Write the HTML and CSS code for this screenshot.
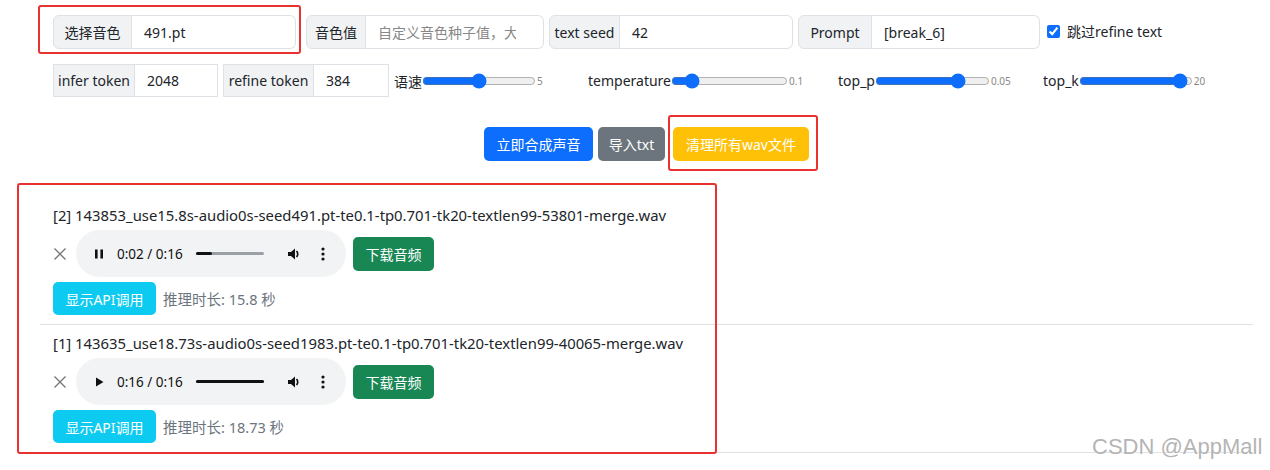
FILE: index.html
```html
<!DOCTYPE html>
<html lang="zh-CN">
<head>
    <meta charset="UTF-8">
    <title>ChatTTS WebUI</title>
    <link rel="stylesheet" href="styles.css">
</head>
<body>
    <div class="page">
        <div class="row row-top">
            <div class="input-group round g-voice">
                <span class="ig-label">选择音色</span>
                <input class="ig-input" type="text" value="491.pt">
            </div>
            <div class="input-group round g-seed">
                <span class="ig-label">音色值</span>
                <input class="ig-input" type="text" placeholder="自定义音色种子值，大于0的整数">
            </div>
            <div class="input-group round g-text">
                <span class="ig-label">text seed</span>
                <input class="ig-input" type="text" value="42">
            </div>
            <div class="input-group round g-prompt">
                <span class="ig-label">Prompt</span>
                <input class="ig-input" type="text" value="[break_6]">
            </div>
            <label class="check">
                <input type="checkbox" checked>
                <span>跳过refine text</span>
            </label>
        </div>

        <div class="row row-params">
            <div class="input-group g-infer">
                <span class="ig-label">infer token</span>
                <input class="ig-input" type="text" value="2048">
            </div>
            <div class="input-group g-refine">
                <span class="ig-label">refine token</span>
                <input class="ig-input" type="text" value="384">
            </div>
            <div class="slider s-speed">
                <span class="s-label">语速</span>
                <input type="range" min="1" max="9" value="5" style="width:114px">
                <span class="s-value">5</span>
            </div>
            <div class="slider s-temp">
                <span class="s-label">temperature</span>
                <input type="range" min="0" max="100" value="13" style="width:117px">
                <span class="s-value">0.1</span>
            </div>
            <div class="slider s-topp">
                <span class="s-label">top_p</span>
                <input type="range" min="0" max="100" value="76" style="width:115px">
                <span class="s-value">0.05</span>
            </div>
            <div class="slider s-topk">
                <span class="s-label">top_k</span>
                <input type="range" min="0" max="100" value="95" style="width:114px">
                <span class="s-value">20</span>
            </div>
        </div>

        <div class="row row-actions">
            <button class="btn btn-primary">立即合成声音</button>
            <button class="btn btn-secondary">导入txt</button>
            <button class="btn btn-warning">清理所有wav文件</button>
        </div>

        <ul class="results">
            <li class="result">
                <div class="result-name">[2] 143853_use15.8s-audio0s-seed491.pt-te0.1-tp0.701-tk20-textlen99-53801-merge.wav</div>
                <div class="player-row">
                    <span class="remove">
                        <svg width="14" height="14" viewBox="0 0 14 14"><path d="M1.5 1.5 L12.5 12.5 M12.5 1.5 L1.5 12.5" stroke="#777" stroke-width="1.4"/></svg>
                    </span>
                    <div class="audio">
                        <svg class="a-play" width="12" height="12" viewBox="0 0 12 12"><rect x="2" y="1.5" width="2.6" height="9" fill="#111"/><rect x="7.4" y="1.5" width="2.6" height="9" fill="#111"/></svg>
                        <span class="a-time">0:02 / 0:16</span>
                        <div class="a-track"><div class="a-played" style="width:24%"></div></div>
                        <svg class="a-vol" width="14" height="14" viewBox="0 0 14 14"><path d="M1 5 H4 L8 1.5 V12.5 L4 9 H1 Z" fill="#111"/><path d="M9.5 4 Q12 7 9.5 10" stroke="#111" stroke-width="1.6" fill="none"/></svg>
                        <svg class="a-more" width="4" height="14" viewBox="0 0 4 14"><circle cx="2" cy="2" r="1.6" fill="#111"/><circle cx="2" cy="7" r="1.6" fill="#111"/><circle cx="2" cy="12" r="1.6" fill="#111"/></svg>
                    </div>
                    <button class="btn btn-success">下载音频</button>
                </div>
                <div class="info-row">
                    <button class="btn btn-info">显示API调用</button>
                    <span class="duration">推理时长: 15.8 秒</span>
                </div>
            </li>
            <li class="result">
                <div class="result-name">[1] 143635_use18.73s-audio0s-seed1983.pt-te0.1-tp0.701-tk20-textlen99-40065-merge.wav</div>
                <div class="player-row">
                    <span class="remove">
                        <svg width="14" height="14" viewBox="0 0 14 14"><path d="M1.5 1.5 L12.5 12.5 M12.5 1.5 L1.5 12.5" stroke="#777" stroke-width="1.4"/></svg>
                    </span>
                    <div class="audio">
                        <svg class="a-play" width="12" height="12" viewBox="0 0 12 12"><path d="M3 1.5 L10.5 6 L3 10.5 Z" fill="#111"/></svg>
                        <span class="a-time">0:16 / 0:16</span>
                        <div class="a-track"><div class="a-played" style="width:100%"></div></div>
                        <svg class="a-vol" width="14" height="14" viewBox="0 0 14 14"><path d="M1 5 H4 L8 1.5 V12.5 L4 9 H1 Z" fill="#111"/><path d="M9.5 4 Q12 7 9.5 10" stroke="#111" stroke-width="1.6" fill="none"/></svg>
                        <svg class="a-more" width="4" height="14" viewBox="0 0 4 14"><circle cx="2" cy="2" r="1.6" fill="#111"/><circle cx="2" cy="7" r="1.6" fill="#111"/><circle cx="2" cy="12" r="1.6" fill="#111"/></svg>
                    </div>
                    <button class="btn btn-success">下载音频</button>
                </div>
                <div class="info-row">
                    <button class="btn btn-info">显示API调用</button>
                    <span class="duration">推理时长: 18.73 秒</span>
                </div>
            </li>
        </ul>
    </div>

    <!-- screenshot annotations -->
    <div class="mark mark-voice"></div>
    <div class="mark mark-clean"></div>
    <div class="mark mark-results"></div>
    <div class="watermark">CSDN @AppMall</div>
</body>
</html>
```

FILE: styles.css
```css
body {
    margin: 0;
    background: #fff;
    color: #212529;
    font-family: "Noto Sans", "Noto Sans CJK SC", sans-serif;
    font-size: 14px;
}

.page {
    width: 1213px;
    margin-left: 40px;
}

.row {
    display: flex;
    align-items: center;
    padding-left: 13px;
}

.row-top {
    margin-top: 15px;
    height: 34px;
}

.row-params {
    margin-top: 15px;
    height: 33px;
}

.row-actions {
    justify-content: center;
    padding-left: 0;
    margin-top: 30px;
    gap: 5px;
}

/* input groups */
.input-group {
    display: flex;
    height: 100%;
    margin-right: 5px;
}

.ig-label {
    display: flex;
    align-items: center;
    justify-content: center;
    box-sizing: border-box;
    background: #f0f2f4;
    border: 1px solid #dee2e6;
    white-space: nowrap;
    flex-shrink: 0;
}

.ig-input {
    flex: 1;
    min-width: 0;
    border: 1px solid #dee2e6;
    border-left: none;
    padding: 0 12px;
    font: inherit;
    color: #212529;
    background: #fff;
    outline: none;
}

.ig-input::placeholder {
    color: #888;
}

.round .ig-label {
    border-radius: 6px 0 0 6px;
}

.round .ig-input {
    border-radius: 0 6px 6px 0;
}

.g-voice { width: 243px; margin-right: 10px; }
.g-voice .ig-label { width: 79px; }
.g-seed { width: 238px; }
.g-seed .ig-label { width: 60px; }
.g-seed .ig-input { padding-right: 27px; }
.g-text { width: 244px; }
.g-text .ig-label { width: 71px; }
.g-prompt { width: 242px; margin-right: 7px; }
.g-prompt .ig-label { width: 74px; }
.g-infer { width: 165px; }
.g-infer .ig-label { width: 82px; }
.g-refine { width: 166px; }
.g-refine .ig-label { width: 91px; }

.check {
    display: flex;
    align-items: center;
    gap: 7px;
    margin-top: -2px;
}

.check input {
    margin: 0;
    width: 13px;
    height: 13px;
    accent-color: #0d6efd;
}

/* sliders */
.slider {
    display: flex;
    align-items: center;
}

.slider input {
    margin: 0;
    accent-color: #0d6efd;
}

.s-value {
    font-size: 10px;
    color: #888;
    margin-left: 1px;
}

.s-speed { width: 194px; }
.s-temp { width: 250px; }
.s-topp { width: 205px; }

/* buttons */
.btn {
    height: 34px;
    padding: 0;
    border: none;
    border-radius: 5px;
    font: inherit;
    color: #fff;
    cursor: pointer;
}

.btn-primary { background: #0d6efd; width: 109px; }
.btn-secondary { background: #6c757d; width: 67px; }
.btn-warning { background: #ffc107; width: 136px; margin-left: 3px; }
.btn-success { background: #198754; width: 81px; }
.btn-info { background: #0dcaf0; width: 103px; height: 33px; }

/* results */
.results {
    list-style: none;
    margin: 36px 0 0;
    padding: 0;
}

.result {
    padding: 8px 13px 9px;
    border-bottom: 1px solid #dee2e6;
}

.result-name {
    height: 20px;
    line-height: 20px;
    font-size: 14.85px;
    white-space: nowrap;
}

.player-row {
    display: flex;
    align-items: center;
    margin-top: 5px;
    height: 47px;
}

.remove {
    width: 23px;
    display: flex;
    align-items: center;
}

.audio {
    display: flex;
    align-items: center;
    width: 270px;
    height: 47px;
    border-radius: 24px;
    background: #f1f3f4;
    box-sizing: border-box;
    padding: 0 0 0 17px;
    margin-right: 7px;
    font-size: 13.5px;
    color: #111;
}

.a-time {
    margin-left: 12px;
    width: 79px;
}

.a-track {
    width: 68px;
    height: 3px;
    border-radius: 2px;
    background: #9aa0a6;
}

.a-played {
    height: 100%;
    border-radius: 2px;
    background: #111;
}

.a-vol {
    margin-left: 23px;
}

.a-more {
    margin-left: 20px;
}

.info-row {
    display: flex;
    align-items: center;
    margin-top: 5px;
    gap: 7px;
}

.duration {
    color: #6c757d;
    font-size: 14.5px;
}

/* annotation boxes from the screenshot */
.mark {
    position: absolute;
    border: 2px solid #e8322f;
    border-radius: 3px;
    box-sizing: border-box;
}

.mark-voice { left: 38px; top: 5px; width: 263px; height: 49px; }
.mark-clean { left: 668px; top: 115px; width: 150px; height: 56px; }
.mark-results { left: 17px; top: 183px; width: 700px; height: 271px; }

.watermark {
    position: absolute;
    left: 1092px;
    top: 434px;
    font-family: "Liberation Sans", sans-serif;
    font-size: 22px;
    color: #b4b4b4;
    text-shadow: 0 0 1px #fff;
}
```
